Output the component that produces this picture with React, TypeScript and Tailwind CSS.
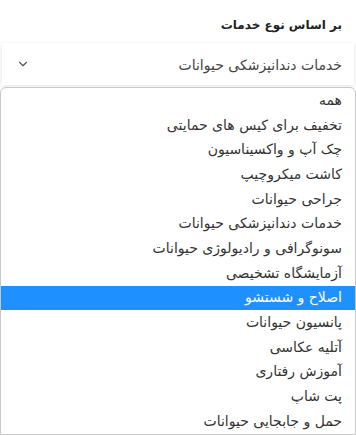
import { ChevronDown } from "lucide-react";

const items = [
  "همه",
  "تخفیف برای کیس های حمایتی",
  "چک آپ و واکسیناسیون",
  "کاشت میکروچیپ",
  "جراحی حیوانات",
  "خدمات دندانپزشکی حیوانات",
  "سونوگرافی و رادیولوژی حیوانات",
  "آزمایشگاه تشخیصی",
  "اصلاح و شستشو",
  "پانسیون حیوانات",
  "آتلیه عکاسی",
  "آموزش رفتاری",
  "پت شاپ",
  "حمل و جابجایی حیوانات",
];

export default function App() {
  return (
    <div
      dir="rtl"
      className="w-[356px] h-[435px] overflow-hidden bg-white text-[#333]"
      style={{ fontFamily: '"DejaVu Sans", Tahoma, sans-serif' }}
    >
      <div className="pt-[16px] pr-[14px] text-[12px] font-bold text-[#222] h-[43px]">
        بر اساس نوع خدمات
      </div>
      <div className="mx-[2px] h-[42px] flex items-center justify-between pr-[12px] pl-[14px] bg-white shadow-[0_1px_4px_rgba(0,0,0,0.12)]">
        <span className="text-[14px] text-[#444] pt-[2px]">خدمات دندانپزشکی حیوانات</span>
        <ChevronDown className="w-[14px] h-[14px] text-[#555]" strokeWidth={2} />
      </div>
      <div className="mt-[2px] border border-[#c8c8c8] rounded-t-[6px] bg-white">
        {items.map((item, i) => (
          <div
            key={item}
            className={`h-[24.7px] flex items-center pr-[13px] text-[14px] ${
              i === 8 ? "bg-[#1e90ff] text-white" : "text-[#333]"
            } ${i === 0 ? "text-[12px]" : ""}`}
          >
            {item}
          </div>
        ))}
      </div>
    </div>
  );
}
